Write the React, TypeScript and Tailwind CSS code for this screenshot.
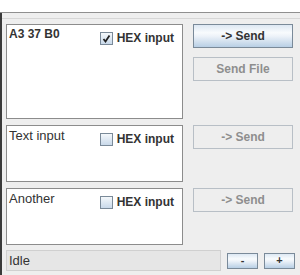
import { useState } from "react";

const sendOn =
  "bg-[linear-gradient(to_bottom,#dde8f3_0%,#f8fbfd_35%,#eef3f9_50%,#b8cfe5_100%)] border border-[#7a8a99] text-[#333333]";
const sendOff = "bg-[#eeeeee] border border-[#b8bfc6] text-[#8e8e8e]";

function HexBox({ checked, onToggle }: { checked: boolean; onToggle: () => void }) {
  return (
    <label className="flex items-center gap-[4px] cursor-pointer select-none" onClick={onToggle}>
      <span className="w-[13px] h-[13px] border border-[#7a8a99] bg-[linear-gradient(to_bottom,#f4f8fb,#c9d9ea)] flex items-center justify-center">
        {checked && (
          <svg width="9" height="9" viewBox="0 0 9 9">
            <path d="M1.5 5 L3.5 7.5 L7.5 1.5" stroke="#222" strokeWidth="1.8" fill="none" />
          </svg>
        )}
      </span>
      <span className="font-bold text-[12px] text-[#333333]">HEX input</span>
    </label>
  );
}

function InputRow({
  text,
  bold,
  hex,
  h,
  enabled,
  extra,
}: {
  text: string;
  bold?: boolean;
  hex: boolean;
  h: string;
  enabled: boolean;
  extra?: boolean;
}) {
  const [checked, setChecked] = useState(hex);
  return (
    <div className="flex gap-[10px]">
      <div className={`w-[177px] ${h} bg-white border border-[#8c8c8c] flex justify-between pl-[2px] pr-[8px] pt-[2px]`}>
        <span className={`text-[#333333] leading-[15px] ${bold ? "font-bold text-[12px]" : "text-[13px]"}`}>{text}</span>
        <div className="mt-[2px] h-[14px]">
          <HexBox checked={checked} onToggle={() => setChecked(!checked)} />
        </div>
      </div>
      <div className="flex flex-col gap-[9px]">
        <button className={`w-[100px] h-[24px] text-[12px] font-bold ${enabled ? sendOn : sendOff}`}>-&gt; Send</button>
        {extra && (
          <button className={`w-[100px] h-[24px] text-[12px] font-bold ${sendOff}`}>Send File</button>
        )}
      </div>
    </div>
  );
}

export default function App() {
  return (
    <div className="w-[300px] h-[275px] bg-white flex flex-col overflow-hidden" style={{ fontFamily: '"Liberation Sans", Arial, sans-serif' }}>
      <div className="h-[13px] bg-white border-b border-[#8f8f8f] shrink-0" />
      <div className="flex-1 bg-[#eeeeee] border-l-2 border-[#3a3a3a] flex flex-col">
        <div className="h-[6px] border-b border-[#d6d6d6]" />
        <div className="pl-[4px] pt-[5px] flex flex-col gap-[6px]">
          <InputRow text="A3 37 B0" bold hex h="h-[95px]" enabled extra />
          <InputRow text="Text input" hex={false} h="h-[57px]" enabled={false} />
          <InputRow text="Another" hex={false} h="h-[57px]" enabled={false} />
          <div className="flex items-center gap-[6px] mt-[-1px]">
            <div className="w-[215px] h-[21px] bg-[#e6e6e6] border border-[#d0d0d0] px-[2px] flex items-center text-[13px] text-[#333333]">
              Idle
            </div>
            <button className={`w-[31px] h-[16px] text-[11px] font-bold leading-none ${sendOn}`}>-</button>
            <button className={`w-[31px] h-[16px] text-[11px] font-bold leading-none ${sendOn}`}>+</button>
          </div>
        </div>
      </div>
    </div>
  );
}
